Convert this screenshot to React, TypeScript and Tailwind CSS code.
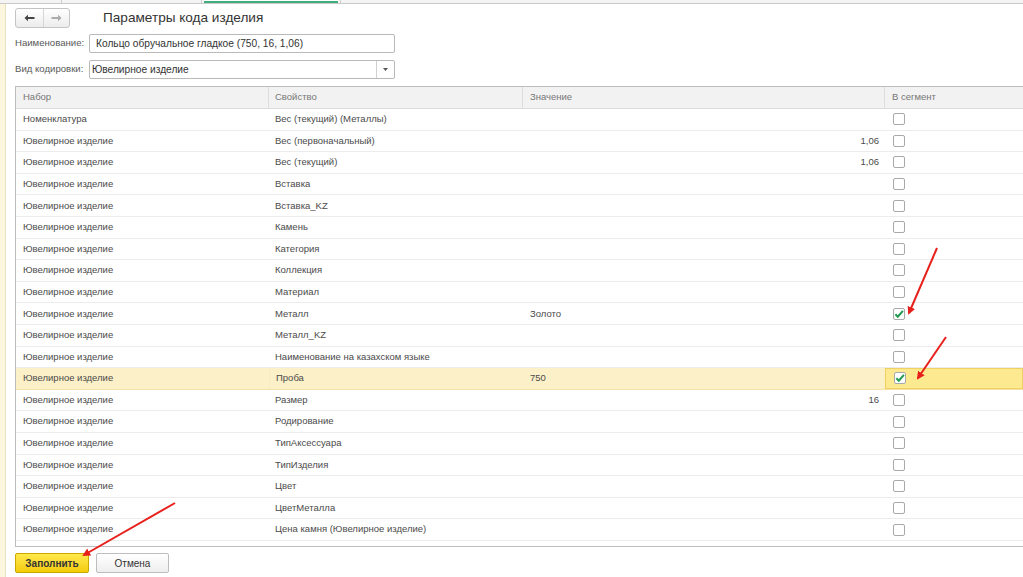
import React from 'react';

type Row = { set: string; prop: string; value?: string; num?: string; checked?: boolean; active?: boolean };

const JI = 'Ювелирное изделие';

const rows: Row[] = [
  { set: 'Номенклатура', prop: 'Вес (текущий) (Металлы)' },
  { set: JI, prop: 'Вес (первоначальный)', num: '1,06' },
  { set: JI, prop: 'Вес (текущий)', num: '1,06' },
  { set: JI, prop: 'Вставка' },
  { set: JI, prop: 'Вставка_KZ' },
  { set: JI, prop: 'Камень' },
  { set: JI, prop: 'Категория' },
  { set: JI, prop: 'Коллекция' },
  { set: JI, prop: 'Материал' },
  { set: JI, prop: 'Металл', value: 'Золото', checked: true },
  { set: JI, prop: 'Металл_KZ' },
  { set: JI, prop: 'Наименование на казахском языке' },
  { set: JI, prop: 'Проба', value: '750', checked: true, active: true },
  { set: JI, prop: 'Размер', num: '16' },
  { set: JI, prop: 'Родирование' },
  { set: JI, prop: 'ТипАксессуара' },
  { set: JI, prop: 'ТипИзделия' },
  { set: JI, prop: 'Цвет' },
  { set: JI, prop: 'ЦветМеталла' },
  { set: JI, prop: 'Цена камня (Ювелирное изделие)' },
];

function Check({ checked }: { checked?: boolean }) {
  return (
    <div className="w-[12px] h-[12px] border border-[#a9a9a9] rounded-[2px] bg-white flex items-center justify-center">
      {checked && (
        <svg width="11" height="10" viewBox="0 0 11 10">
          <path d="M1.5 5.2 L4.2 8 L9.8 1.6" fill="none" stroke="#1f9a4f" strokeWidth="2.2" />
        </svg>
      )}
    </div>
  );
}

function TableRow({ r }: { r: Row }) {
  return (
    <div
      className={
        'flex h-[21.6px] items-center border-b ' +
        (r.active ? 'bg-[#fcf0c8] border-[#f4e3a4]' : 'border-[#ececec]')
      }
    >
      <div className="w-[253px] pl-[7px] whitespace-nowrap">{r.set}</div>
      <div className={'w-[254px] pl-[6px] h-full flex items-center whitespace-nowrap ' + (r.active ? 'border-l border-[#f7ebc0]' : '')}>
        {r.prop}
      </div>
      <div className="w-[362px] pl-[7px] pr-[6px] flex items-center">
        <span className="flex-1 text-[#4a4a4a]">{r.value}</span>
        {r.num && <span className="text-[#4a4a4a]">{r.num}</span>}
      </div>
      <div
        className={
          'flex-1 h-full flex items-center pl-[8px] ' +
          (r.active ? 'bg-[#fde98f] border border-[#f0d060]' : '')
        }
      >
        <Check checked={r.checked} />
      </div>
    </div>
  );
}

export default function App() {
  return (
    <div className="relative w-[1023px] h-[577px] overflow-hidden bg-white text-[9.5px] text-[#4a4a4a] font-['Liberation_Sans',Arial,sans-serif]">
      {/* top tab strip */}
      <div className="flex h-[4px] bg-[#f4f4f4] border-b border-[#c9c9c9]">
        <div className="w-[62px] border-r border-[#cfcfcf]" />
        <div className="w-[140px] border-r border-[#cfcfcf]" />
        <div className="w-[134px] ml-[2px] border-b-2 border-[#3fae7b] bg-white" />
        <div className="w-[3px] border-r border-[#cfcfcf]" />
      </div>

      <div className="flex h-[573px]">
        {/* left panel edge */}
        <div className="w-[6px] bg-[#fbf6dd] border-r border-[#e8e1bb]" />

        <div className="flex-1 pl-[9px] pt-[4px] flex flex-col">
          {/* header */}
          <div className="flex items-center h-[20px] mb-[6px]">
            <div className="flex h-[20px] w-[55px] border border-[#c4c4c4] rounded-[3px] bg-gradient-to-b from-white to-[#ececec]">
              <div className="w-[28px] flex items-center justify-center border-r border-[#d6d6d6]">
                <svg width="11" height="8" viewBox="0 0 11 8">
                  <path d="M0.5 4 L4 0.8 L4 3 L10.5 3 L10.5 5 L4 5 L4 7.2 Z" fill="#444" />
                </svg>
              </div>
              <div className="flex-1 flex items-center justify-center">
                <svg width="11" height="8" viewBox="0 0 11 8">
                  <path d="M10.5 4 L7 0.8 L7 3 L0.5 3 L0.5 5 L7 5 L7 7.2 Z" fill="#aaa" />
                </svg>
              </div>
            </div>
            <div className="ml-[33px] text-[13.6px] text-[#333]">Параметры кода изделия</div>
          </div>

          {/* fields */}
          <div className="flex items-center h-[19px] mb-[7px]">
            <div className="w-[74px] text-[9.6px] text-[#5a5a5a] whitespace-nowrap">Наименование:</div>
            <div className="w-[306px] h-[19px] border border-[#b9b9b9] rounded-[2px] flex items-center pl-[6px] text-[10.2px] text-[#333]">
              Кольцо обручальное гладкое (750, 16, 1,06)
            </div>
          </div>
          <div className="flex items-center h-[19px] mb-[7px]">
            <div className="w-[74px] text-[9.6px] text-[#5a5a5a] whitespace-nowrap">Вид кодировки:</div>
            <div className="w-[306px] h-[19px] border border-[#b9b9b9] rounded-[2px] flex items-center text-[10.2px] text-[#333]">
              <span className="flex-1 pl-[2px]">{JI}</span>
              <div className="w-[18px] h-full border-l border-[#d0d0d0] flex items-center justify-center">
                <svg width="5" height="3" viewBox="0 0 5 3">
                  <path d="M0 0 L5 0 L2.5 3 Z" fill="#555" />
                </svg>
              </div>
            </div>
          </div>

          {/* table */}
          <div className="h-[461px] border-l border-t border-b border-[#bdbdbd]">
            <div className="flex h-[22px] items-center bg-[#f2f2f2] border-b border-[#dcdcdc] text-[#777]">
              <div className="w-[253px] pl-[7px] h-full flex items-center border-r border-[#dedede]">Набор</div>
              <div className="w-[254px] pl-[6px] h-full flex items-center border-r border-[#dedede]">Свойство</div>
              <div className="w-[362px] pl-[7px] h-full flex items-center border-r border-[#dedede]">Значение</div>
              <div className="flex-1 pl-[7px] h-full flex items-center">В сегмент</div>
            </div>
            {rows.map((r, i) => (
              <TableRow key={i} r={r} />
            ))}
          </div>

          {/* buttons */}
          <div className="flex gap-[7px] mt-[6px]">
            <button className="w-[74px] h-[20px] rounded-[2px] border border-[#c9a800] bg-gradient-to-b from-[#ffe94a] to-[#f4cc00] text-[#333] text-[10px] font-bold">
              Заполнить
            </button>
            <button className="w-[73px] h-[20px] rounded-[2px] border border-[#bdbdbd] bg-gradient-to-b from-white to-[#eeeeee] text-[#333] text-[10px]">
              Отмена
            </button>
          </div>
        </div>
      </div>

      {/* annotation arrows */}
      <svg className="absolute inset-0 pointer-events-none" width="1023" height="577">
        <defs>
          <marker id="ah" markerWidth="8" markerHeight="8" refX="6" refY="4" orient="auto" markerUnits="userSpaceOnUse">
            <path d="M0 0 L8 4 L0 8 Z" fill="#e8201c" />
          </marker>
        </defs>
        <line x1="937" y1="248" x2="909" y2="313" stroke="#e8201c" strokeWidth="2" markerEnd="url(#ah)" />
        <line x1="946" y1="337" x2="918" y2="378" stroke="#e8201c" strokeWidth="2" markerEnd="url(#ah)" />
        <line x1="175" y1="503" x2="84" y2="555" stroke="#e8201c" strokeWidth="2" markerEnd="url(#ah)" />
      </svg>
    </div>
  );
}
